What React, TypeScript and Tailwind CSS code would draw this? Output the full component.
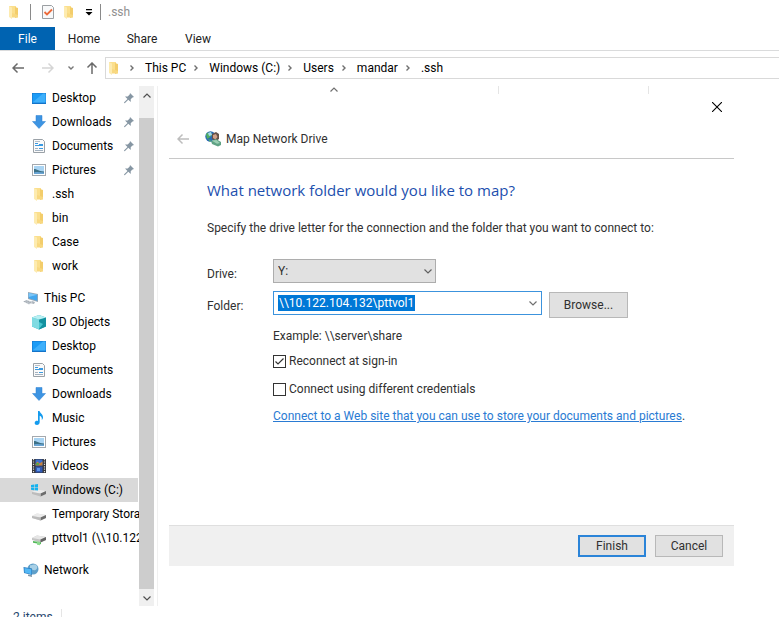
import React from "react";

type IconProps = { className?: string };

const Svg = ({ children, className = "size-4" }: IconProps & { children: React.ReactNode }) => (
  <svg viewBox="0 0 16 16" className={`shrink-0 ${className}`} aria-hidden="true">
    {children}
  </svg>
);

const FolderIcon = () => (
  <Svg>
    <path d="M3 2h7v11H3z" fill="#fbdf8d" />
    <path d="M9 3l3 1v9l-3 1z" fill="#f3cd6b" />
    <path d="M3 2l3 1.500v11.500L3 13z" fill="#fdebb0" />
    <path d="M6 9l6 2v2.500H6z" fill="#f8d880" />
  </Svg>
);

const DesktopIcon = () => (
  <Svg>
    <rect x="1" y="3" width="14" height="11" fill="#1473c8" />
    <rect x="1.500" y="3.500" width="13" height="9" fill="#1c9cf6" />
    <path d="M1.500 12.500L12 3.500h2.500v9z" fill="#3fb0fb" />
  </Svg>
);

const DownloadIcon = () => (
  <Svg>
    <path d="M5 1.500h6v6h3.500L8 14.500 1.500 7.500H5z" fill="#3d94e2" stroke="#2b7fd0" strokeWidth=".5" />
  </Svg>
);

const DocumentIcon = () => (
  <Svg>
    <path d="M2.500 1.500h9l2 2v11h-11z" fill="#fafafa" stroke="#9aa1a7" />
    <path d="M4 3.500h5" stroke="#b8c0c8" />
    <path d="M4 12.500h8M4 10.500h3" stroke="#a3b1bf" />
    <path d="M4 5.500h3M8 6.500h4M4 7.500h8M8 10.500h4" stroke="#3a9ae2" />
  </Svg>
);

const PictureIcon = () => (
  <Svg>
    <rect x="1.500" y="2.500" width="13" height="11" fill="#fff" stroke="#a4a9ae" />
    <path d="M3 4h10v8H3z" fill="#a9d4f3" />
    <path d="M3 7c3 0 4 2 10 2.500V12H3z" fill="#3d7187" />
    <path d="M3 10.500c4-1 7 0 10 0V12H3z" fill="#6aa5d4" />
  </Svg>
);

const CubeIcon = () => (
  <Svg>
    <path d="M1 3.500L8 1l7 2.500v9L8 15.500 1 12.500z" fill="#29b5c4" />
    <path d="M1 3.500L8 5.500v10L1 12.500z" fill="#7fdbe2" />
    <path d="M8 5.500l7-2v9l-7 3z" fill="#13919f" />
    <path d="M1 3.500L8 1l7 2.500-7 2z" fill="#b9eff2" />
    <path d="M8 8l4 2-4 5z" fill="#47c5cf" />
  </Svg>
);

const MusicIcon = () => (
  <Svg>
    <path d="M7 1h1.500c.5 2.500 4 3.200 3.500 7-.3 1-.8 1.500-1.200 2 .4-2.500-.8-3.700-2.100-4.200V12c0 2-1.300 3-2.700 3S3.500 14 3.700 12.700C4 11 5.500 10.500 7 11z" fill="#149bee" />
  </Svg>
);

const VideoIcon = () => (
  <Svg>
    <rect x="1" y="1" width="14" height="14" fill="#35363b" />
    <path d="M2.500 1v14M13.500 1v14" stroke="#dedede" strokeWidth="1.200" strokeDasharray="1.200 1.200" />
    <rect x="4.500" y="1.500" width="7" height="6" fill="#3b6fd0" />
    <rect x="4.500" y="8.500" width="7" height="6" fill="#3159b3" />
    <path d="M4.500 6l2-2.500 2 2 3-2v4h-7z" fill="#c9823c" />
    <path d="M5 5h3v2H5z" fill="#5aa549" />
    <path d="M6 10h3v3H6z" fill="#5b94ea" />
  </Svg>
);

const DriveShape = () => (
  <>
    <path d="M1 10l5-2.500L15 9v3l-5.500 2.500L1 12z" fill="#d8d8d8" />
    <path d="M1 10l5-2.500L15 9l-5.500 2.500z" fill="#ececec" />
    <path d="M9.500 11.500L15 9v3l-5.500 2.500z" fill="#6d6d6d" />
    <path d="M1 10l8.500 1.500v3L1 12z" fill="#bcbcbc" />
  </>
);

const DriveIcon = () => (
  <Svg>
    <DriveShape />
  </Svg>
);

const WindowsDriveIcon = () => (
  <Svg>
    <DriveShape />
    <path d="M0 3l3-.5V5H0zM3.600 2.400L7 2v3H3.600zM0 5.600h3v2.600l-3-.4zM3.600 5.600H7v3l-3.400-.4z" fill="#17b2ee" />
  </Svg>
);

const NetworkDriveIcon = () => (
  <Svg>
    <path d="M1 8l5-2.500L15 7v3l-5.500 2.500L1 10z" fill="#c4c4c4" />
    <path d="M1 8l5-2.500L15 7l-5.500 2.500z" fill="#e6e6e6" />
    <path d="M9.500 9.500L15 7v3l-5.500 2.500z" fill="#636363" />
    <path d="M2 11l8 1.300v2L2 12.700z" fill="#55b85c" />
    <path d="M6 11.500l3 .5v3.200l-3-.5z" fill="#8ad98c" />
  </Svg>
);

const ComputerIcon = () => (
  <Svg>
    <path d="M5 2l10 2v8L5 9z" fill="#9aa7b3" />
    <path d="M5.700 3l8.500 1.700v6L5.700 8.300z" fill="#43a7ee" />
    <path d="M5.700 3l8.500 1.700L5.700 7z" fill="#7cc6f7" />
    <path d="M9 11l3 1-1 2-4-1z" fill="#aab2ba" />
    <path d="M0 11.500l4-1.500 6 2-4 2.500z" fill="#c9cfd5" />
    <path d="M1 11.700l3-1M3 12.400l3-1M5 13.200l3-1" stroke="#8d969e" strokeWidth=".6" />
  </Svg>
);

const NetworkIcon = () => (
  <Svg>
    <circle cx="10" cy="7" r="5.500" fill="#5f9fc9" />
    <path d="M7 3c2 1 4-1.500 6 0s1.500 4-.5 5-4-1-5.500-2z" fill="#a8d0e6" />
    <path d="M0.500 5l8.500 1.500v6.500L1 11z" fill="#2e7fc1" />
    <path d="M1.500 6l6.800 1.200v5L1.700 10.400z" fill="#52b7f5" />
    <path d="M5 12.500l4 .8v1.700l-4-1z" fill="#8198aa" />
  </Svg>
);

const MapDriveIcon = () => (
  <Svg>
    <circle cx="5.500" cy="5.500" r="5.200" fill="#2868b5" />
    <path d="M1 3c2-2 4-1 5-2l1 3-3 3-2 1zM3 8l3 1-1 2z" fill="#4fae61" />
    <path d="M3 2l3-1 1 3-3 1z" fill="#a5d8ee" />
    <path d="M7 3l4-2 3 2v5l-3 2-4-2z" fill="#635149" />
    <path d="M8 4l3-1 1.500 3-2 2.500L8 7z" fill="#cfa18a" />
    <path d="M6 10l5-2 5 3v3l-3 1.500L7 13z" fill="#5fa284" />
    <path d="M6.500 9.500l5-.5 3.500 3-3 .7z" fill="#9bceb2" />
  </Svg>
);

const PinIcon = () => (
  <svg viewBox="0 0 12 12" className="size-3 shrink-0" aria-hidden="true">
    <path d="M7 1l4 4-1.500.4-1.800 1.900.1 2.600L5.300 7.700 2 11l-1 .3.200-1L4.500 7 2 4.500l2.700-.1L6.700 2.500z" fill="#8696a3" />
  </svg>
);

const PropertiesIcon = () => (
  <svg viewBox="0 0 14 16" className="h-4 w-3.5 shrink-0" aria-hidden="true">
    <path d="M1.500 1.500h9l2 2v11h-11z" fill="#f8f9fa" stroke="#9b9fa3" />
    <path d="M3.500 8l2.500 2.500 5-5" fill="none" stroke="#ec6a3a" strokeWidth="1.800" />
  </svg>
);

const Arrow = ({ className }: IconProps) => (
  <svg viewBox="0 0 12 12" className={`size-3 shrink-0 ${className ?? ""}`} fill="none" stroke="currentColor" aria-hidden="true">
    <path d="M12 6H1M5.500 1.500L1 6l4.500 4.500" strokeWidth="1.500" />
  </svg>
);

const Chevron = ({ className }: IconProps) => (
  <svg viewBox="0 0 8 8" className={`size-2 shrink-0 ${className ?? ""}`} fill="none" stroke="currentColor" aria-hidden="true">
    <path d="M0.500 2.500L4 6l3.500-3.500" strokeWidth="1.200" />
  </svg>
);

const CrumbChevron = () => (
  <svg viewBox="0 0 8 8" className="ml-1.5 mr-[9px] size-2 shrink-0" fill="none" stroke="#6f6f6f" aria-hidden="true">
    <path d="M2.500 1.500L5 4 2.500 6.500" strokeWidth="1.400" />
  </svg>
);

type Entry = { label: string; Icon: () => React.ReactElement; pinned?: boolean; selected?: boolean };

const quickAccess: Entry[] = [
  { label: "Desktop", Icon: DesktopIcon, pinned: true },
  { label: "Downloads", Icon: DownloadIcon, pinned: true },
  { label: "Documents", Icon: DocumentIcon, pinned: true },
  { label: "Pictures", Icon: PictureIcon, pinned: true },
  { label: ".ssh", Icon: FolderIcon },
  { label: "bin", Icon: FolderIcon },
  { label: "Case", Icon: FolderIcon },
  { label: "work", Icon: FolderIcon },
];

const thisPc: Entry[] = [
  { label: "3D Objects", Icon: CubeIcon },
  { label: "Desktop", Icon: DesktopIcon },
  { label: "Documents", Icon: DocumentIcon },
  { label: "Downloads", Icon: DownloadIcon },
  { label: "Music", Icon: MusicIcon },
  { label: "Pictures", Icon: PictureIcon },
  { label: "Videos", Icon: VideoIcon },
  { label: "Windows (C:)", Icon: WindowsDriveIcon, selected: true },
  { label: "Temporary Stora", Icon: DriveIcon },
  { label: "pttvol1 (\\\\10.122", Icon: NetworkDriveIcon },
];

const TreeRow = ({ label, Icon, pinned, selected, root }: Entry & { root?: boolean }) => (
  <li>
    <button
      type="button"
      className={`flex h-6 w-full items-center gap-[5px] whitespace-nowrap text-left ${root ? "pl-[23px]" : "pl-[31px]"} ${selected ? "bg-[#d9d9d9]" : ""}`}
    >
      <Icon />
      <span>{label}</span>
      {pinned && (
        <span className="ml-auto pr-[3px]">
          <PinIcon />
        </span>
      )}
    </button>
  </li>
);

const Sidebar = () => (
  <aside className="flex w-[158px] shrink-0 border-r border-[#f0f0f0]">
    <nav className="w-[138px] shrink-0" aria-label="Folders">
      <ul>
        {quickAccess.map((e) => (
          <TreeRow key={e.label} {...e} />
        ))}
      </ul>
      <ul className="mt-2">
        <TreeRow label="This PC" Icon={ComputerIcon} root />
        {thisPc.map((e) => (
          <TreeRow key={e.label} {...e} />
        ))}
      </ul>
      <ul className="mt-2">
        <TreeRow label="Network" Icon={NetworkIcon} root />
      </ul>
    </nav>
    <div className="ml-px flex w-[15px] flex-col bg-[#f0f0f0] text-[#505050]">
      <button type="button" aria-label="Scroll up" className="flex h-8 items-start justify-center pt-1.5">
        <Chevron className="rotate-180" />
      </button>
      <div className="flex-1 bg-[#cdcdcd]" />
      <button type="button" aria-label="Scroll down" className="flex h-[17px] items-center justify-center">
        <Chevron />
      </button>
    </div>
  </aside>
);

const crumbs = ["This PC", "Windows (C:)", "Users", "mandar", ".ssh"];

const Dialog = () => (
  <section role="dialog" aria-label="Map Network Drive" className="ml-[11px] mr-[45px] flex h-[472px] flex-col bg-white text-[#303030]">
    <div className="flex h-8 justify-end pr-[11px] pt-[7px]">
      <button type="button" aria-label="Close" className="flex h-3 w-3 items-center justify-center text-black">
        <svg viewBox="0 0 10 10" className="size-2.5" fill="none" stroke="currentColor" aria-hidden="true">
          <path d="M0 0l10 10M10 0L0 10" strokeWidth="1.100" />
        </svg>
      </button>
    </div>
    <header className="flex h-[33px] items-start border-b border-[#c8c8c8] pl-2">
      <button type="button" aria-label="Back" className="flex h-[26px] items-center text-[#bdbdbd]">
        <Arrow />
      </button>
      <h1 className="ml-4 flex h-[26px] items-center gap-[5px]">
        <MapDriveIcon />
        Map Network Drive
      </h1>
    </header>

    <form className="flex flex-1 flex-col" onSubmit={(e) => e.preventDefault()}>
      <div className="flex-1 pl-[38px]">
        <h2 className="mt-[19px] font-['Open_Sans','Noto_Sans',sans-serif] text-[15px] leading-6 text-[#1c4fae]">What network folder would you like to map?</h2>
        <p className="mt-4 leading-5">Specify the drive letter for the connection and the folder that you want to connect to:</p>
        <div className="mt-[21px] grid grid-cols-[66px_1fr]">
          <label htmlFor="drive" className="pt-[5px] leading-5">Drive:</label>
          <div className="relative h-8 w-[163px]">
            <select id="drive" defaultValue="Y:" className="h-6 w-full appearance-none border border-[#adadad] bg-[#e1e1e1] pl-1">
              <option>Y:</option>
            </select>
            <Chevron className="pointer-events-none absolute right-1 top-2 text-[#606060]" />
          </div>
          <label htmlFor="folder" className="pt-[5px] leading-5">Folder:</label>
          <div className="flex h-9 items-start gap-[7px]">
            <div className="flex h-6 w-[269px] items-center justify-between border border-[#3c93dd] bg-white px-1">
              <input id="folder" defaultValue="\\10.122.104.132\pttvol1" className="h-4 w-[137px] bg-[#0078d7] px-px text-white outline-none" />
              <Chevron className="text-[#707070]" />
            </div>
            <button type="button" className="mt-px h-[26px] w-[79px] border border-[#b8b8b8] bg-[#e1e1e1]">Browse...</button>
          </div>
        </div>
        <div className="pl-[66px]">
          <p className="leading-[18px]">Example: \\server\share</p>
          <label className="mt-[7px] flex h-[18px] items-center gap-[3px]">
            <input type="checkbox" defaultChecked className="size-[13px] appearance-none border border-[#333]" />
            <svg viewBox="0 0 13 13" className="pointer-events-none -ml-4 size-[13px]" fill="none" stroke="#333" aria-hidden="true">
              <path d="M2.500 6.500L5 9l5.500-5.500" strokeWidth="1.200" />
            </svg>
            Reconnect at sign-in
          </label>
          <label className="mt-2.5 flex h-[18px] items-center gap-[3px]">
            <input type="checkbox" className="size-[13px] appearance-none border border-[#333]" />
            Connect using different credentials
          </label>
          <p className="mt-[9px] leading-[18px]">
            <a href="#" className="text-[#2a7bd3] underline">Connect to a Web site that you can use to store your documents and pictures</a>.
          </p>
        </div>
      </div>
      <footer className="flex h-[41px] items-center justify-end gap-[9px] border-t border-[#dfdfdf] bg-[#f0f0f0] pr-[11px]">
        <button type="submit" className="h-[22px] w-[68px] border-2 border-[#2b84d8] bg-[#e1e1e1]">Finish</button>
        <button type="button" className="h-[22px] w-[68px] border border-[#b8b8b8] bg-[#e1e1e1]">Cancel</button>
      </footer>
    </form>
  </section>
);

export default function App() {
  return (
    <div className="flex h-screen flex-col overflow-hidden bg-white font-[Roboto,'Noto_Sans',sans-serif] text-[12px] text-black">
      <div className="flex h-[27px] shrink-0 items-start pl-1.5 pt-1 text-[#8f8f8f]">
        <FolderIcon />
        <span className="ml-2 h-4 w-px bg-[#8a8a8a]" />
        <span className="ml-2.5"><PropertiesIcon /></span>
        <span className="ml-1.5"><FolderIcon /></span>
        <svg viewBox="0 0 8 8" className="ml-2 mt-1 size-2" aria-hidden="true">
          <path d="M1 1h6v1.200H1zM0.500 4h7L4 7.500z" fill="#000" />
        </svg>
        <span className="ml-[7px] h-4 w-px bg-[#8a8a8a]" />
        <span className="ml-[7px] leading-4">.ssh</span>
      </div>
      <nav className="flex h-6 shrink-0 items-stretch border-b border-[#dadbdc] text-[#222]" aria-label="Ribbon">
        <button type="button" className="w-[55px] bg-[#0063b1] text-white">File</button>
        <button type="button" className="w-[58px]">Home</button>
        <button type="button" className="w-[58px]">Share</button>
        <button type="button" className="w-[54px]">View</button>
      </nav>
      <div className="mt-1.5 flex h-[22px] shrink-0 items-center">
        <button type="button" aria-label="Back" className="ml-3 text-[#6a6a6a]"><Arrow /></button>
        <button type="button" aria-label="Forward" className="ml-[18px] text-[#d5d5d5]"><Arrow className="rotate-180" /></button>
        <button type="button" aria-label="Recent" className="ml-[13px] text-[#777]">
          <svg viewBox="0 0 8 8" className="size-2" fill="none" stroke="currentColor" aria-hidden="true">
            <path d="M1.500 2.500L4 5l2.500-2.500" strokeWidth="1.400" />
          </svg>
        </button>
        <button type="button" aria-label="Up" className="ml-[11px] text-[#6a6a6a]"><Arrow className="rotate-90" /></button>
        <div className="ml-[7px] flex h-full flex-1 items-center border-y border-l border-[#d9d9d9]">
          <FolderIcon />
          {crumbs.map((c) => (
            <React.Fragment key={c}>
              <CrumbChevron />
              <button type="button">{c}</button>
            </React.Fragment>
          ))}
        </div>
      </div>
      <div className="mt-[7px] flex h-[520px] shrink-0">
        <Sidebar />
        <main className="min-w-0 flex-1">
          <div className="grid h-2 grid-cols-[341px_150px_1fr] text-[#707070]">
            <div className="flex justify-center border-r border-[#e5e5e5] pl-3"><Chevron className="rotate-180" /></div>
            <div className="border-r border-[#e5e5e5]" />
          </div>
          <Dialog />
        </main>
      </div>
      <footer className="flex shrink-0 items-start pt-[3px] text-[#26466d]">
        <span className="pl-[13px] leading-4">2 items</span>
        <span className="ml-2 h-4 w-px bg-[#e5e5e5]" />
      </footer>
    </div>
  );
}
